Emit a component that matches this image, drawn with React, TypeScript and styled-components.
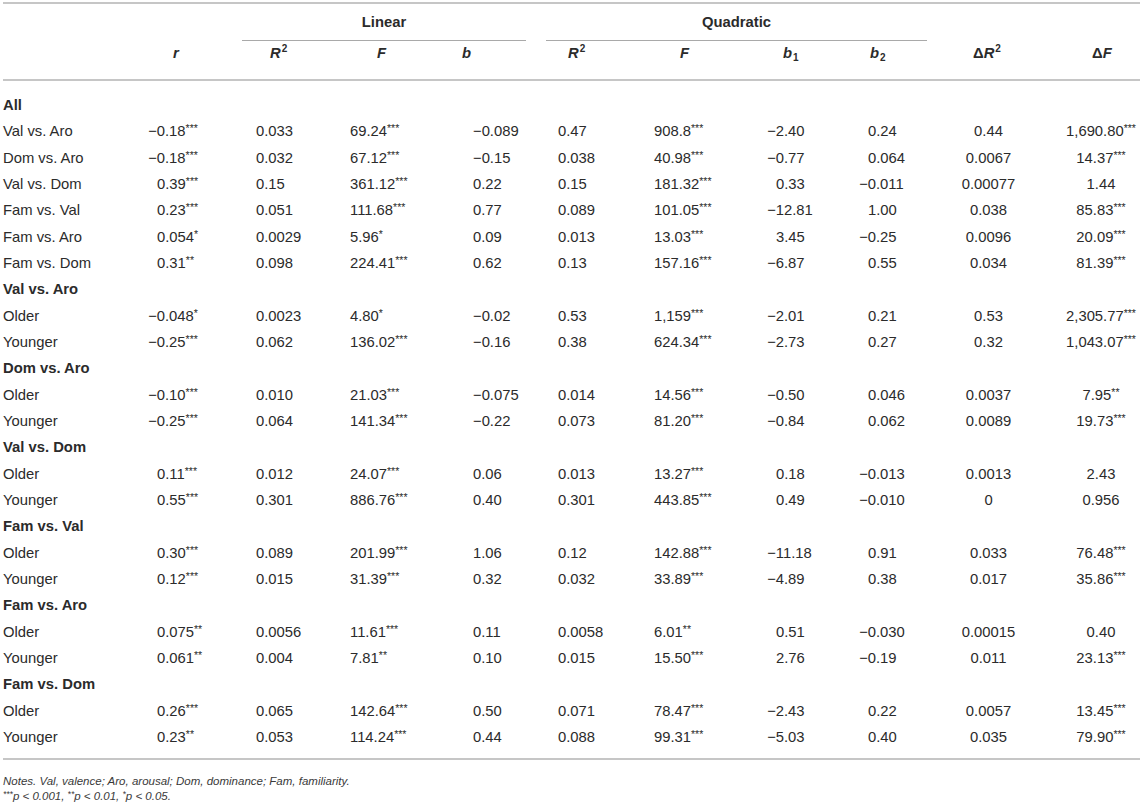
import React from "react";
import styled, { createGlobalStyle } from "styled-components";

const GlobalStyle = createGlobalStyle`
  body {
    margin: 0;
    background: #ffffff;
    font-family: "Liberation Sans", Arial, sans-serif;
    color: #2b2b2b;
  }
`;

// column widths, left to right (label, r, linear R2/F/b, quadratic R2/F/b1/b2, dR2, dF)
const COLS = [117, 112, 92, 116, 96, 84, 120, 90, 107, 103, 100];
const GRID = COLS.map((w) => `${w}px`).join(" ");
const ROW_H = 26.33;

type Mode = "left" | "hang" | "center";
type ColSpec = { mode: Mode; pad: number; head: number };

const SPECS: ColSpec[] = [
  { mode: "hang", pad: 37, head: 53 },
  { mode: "left", pad: 24, head: 38 },
  { mode: "left", pad: 26, head: 53 },
  { mode: "left", pad: 33, head: 22 },
  { mode: "left", pad: 22, head: 32 },
  { mode: "left", pad: 34, head: 60 },
  { mode: "hang", pad: 36, head: 43 },
  { mode: "hang", pad: 38, head: 40 },
  { mode: "center", pad: 0, head: 36 },
  { mode: "center", pad: 22, head: 52 }
];

type Row = { label: string; values?: string[] };

const ROWS: Row[] = [
  { label: "All" },
  { label: "Val vs. Aro", values: ["−0.18***", "0.033", "69.24***", "−0.089", "0.47", "908.8***", "−2.40", "0.24", "0.44", "1,690.80***"] },
  { label: "Dom vs. Aro", values: ["−0.18***", "0.032", "67.12***", "−0.15", "0.038", "40.98***", "−0.77", "0.064", "0.0067", "14.37***"] },
  { label: "Val vs. Dom", values: ["0.39***", "0.15", "361.12***", "0.22", "0.15", "181.32***", "0.33", "−0.011", "0.00077", "1.44"] },
  { label: "Fam vs. Val", values: ["0.23***", "0.051", "111.68***", "0.77", "0.089", "101.05***", "−12.81", "1.00", "0.038", "85.83***"] },
  { label: "Fam vs. Aro", values: ["0.054*", "0.0029", "5.96*", "0.09", "0.013", "13.03***", "3.45", "−0.25", "0.0096", "20.09***"] },
  { label: "Fam vs. Dom", values: ["0.31**", "0.098", "224.41***", "0.62", "0.13", "157.16***", "−6.87", "0.55", "0.034", "81.39***"] },
  { label: "Val vs. Aro" },
  { label: "Older", values: ["−0.048*", "0.0023", "4.80*", "−0.02", "0.53", "1,159***", "−2.01", "0.21", "0.53", "2,305.77***"] },
  { label: "Younger", values: ["−0.25***", "0.062", "136.02***", "−0.16", "0.38", "624.34***", "−2.73", "0.27", "0.32", "1,043.07***"] },
  { label: "Dom vs. Aro" },
  { label: "Older", values: ["−0.10***", "0.010", "21.03***", "−0.075", "0.014", "14.56***", "−0.50", "0.046", "0.0037", "7.95**"] },
  { label: "Younger", values: ["−0.25***", "0.064", "141.34***", "−0.22", "0.073", "81.20***", "−0.84", "0.062", "0.0089", "19.73***"] },
  { label: "Val vs. Dom" },
  { label: "Older", values: ["0.11***", "0.012", "24.07***", "0.06", "0.013", "13.27***", "0.18", "−0.013", "0.0013", "2.43"] },
  { label: "Younger", values: ["0.55***", "0.301", "886.76***", "0.40", "0.301", "443.85***", "0.49", "−0.010", "0", "0.956"] },
  { label: "Fam vs. Val" },
  { label: "Older", values: ["0.30***", "0.089", "201.99***", "1.06", "0.12", "142.88***", "−11.18", "0.91", "0.033", "76.48***"] },
  { label: "Younger", values: ["0.12***", "0.015", "31.39***", "0.32", "0.032", "33.89***", "−4.89", "0.38", "0.017", "35.86***"] },
  { label: "Fam vs. Aro" },
  { label: "Older", values: ["0.075**", "0.0056", "11.61***", "0.11", "0.0058", "6.01**", "0.51", "−0.030", "0.00015", "0.40"] },
  { label: "Younger", values: ["0.061**", "0.004", "7.81**", "0.10", "0.015", "15.50***", "2.76", "−0.19", "0.011", "23.13***"] },
  { label: "Fam vs. Dom" },
  { label: "Older", values: ["0.26***", "0.065", "142.64***", "0.50", "0.071", "78.47***", "−2.43", "0.22", "0.0057", "13.45***"] },
  { label: "Younger", values: ["0.23**", "0.053", "114.24***", "0.44", "0.088", "99.31***", "−5.03", "0.40", "0.035", "79.90***"] }
];

function Value({ text, mode }: { text: string; mode: Mode }) {
  const m = text.match(/^(.*?)(\*+)?$/);
  const num = m ? m[1] : text;
  const stars = m && m[2] ? m[2] : "";
  const neg = mode === "hang" && num.startsWith("−");
  return (
    <>
      {neg ? (
        <>
          <Minus>−</Minus>
          {num.slice(1)}
        </>
      ) : (
        num
      )}
      {stars && <Stars>{stars}</Stars>}
    </>
  );
}

export default function App() {
  return (
    <>
      <GlobalStyle />
      <Page>
        <Table>
          <GroupRow>
            <span />
            <span />
            <Group $span={3}>
              <GroupTitle>Linear</GroupTitle>
            </Group>
            <Group $span={4}>
              <GroupTitle>Quadratic</GroupTitle>
            </Group>
          </GroupRow>
          <HeadRow>
            <span />
            <Head $pad={SPECS[0].head}>
              <Ital>r</Ital>
            </Head>
            <Head $pad={SPECS[1].head}>
              <Ital>R</Ital>
              <Pow>2</Pow>
            </Head>
            <Head $pad={SPECS[2].head}>
              <Ital>F</Ital>
            </Head>
            <Head $pad={SPECS[3].head}>
              <Ital>b</Ital>
            </Head>
            <Head $pad={SPECS[4].head}>
              <Ital>R</Ital>
              <Pow>2</Pow>
            </Head>
            <Head $pad={SPECS[5].head}>
              <Ital>F</Ital>
            </Head>
            <Head $pad={SPECS[6].head}>
              <Ital>b</Ital>
              <Sub>1</Sub>
            </Head>
            <Head $pad={SPECS[7].head}>
              <Ital>b</Ital>
              <Sub>2</Sub>
            </Head>
            <Head $pad={SPECS[8].head}>
              Δ<Ital>R</Ital>
              <Pow>2</Pow>
            </Head>
            <Head $pad={SPECS[9].head}>
              Δ<Ital>F</Ital>
            </Head>
          </HeadRow>
          <Body>
            {ROWS.map((row, i) =>
              row.values ? (
                <DataRow key={i}>
                  <Label>{row.label}</Label>
                  {row.values.map((v, j) => (
                    <Cell key={j} $pad={SPECS[j].pad} $center={SPECS[j].mode === "center"}>
                      <Value text={v} mode={SPECS[j].mode} />
                    </Cell>
                  ))}
                </DataRow>
              ) : (
                <DataRow key={i}>
                  <Section>{row.label}</Section>
                </DataRow>
              )
            )}
          </Body>
        </Table>
        <Notes>
          <NoteLine>Notes. Val, valence; Aro, arousal; Dom, dominance; Fam, familiarity.</NoteLine>
          <NoteLine>
            <NoteStar>***</NoteStar>p &lt; 0.001, <NoteStar>**</NoteStar>p &lt; 0.01, <NoteStar>*</NoteStar>p &lt; 0.05.
          </NoteLine>
        </Notes>
      </Page>
    </>
  );
}

const Page = styled.div`
  width: 1137px;
  padding: 2px 0 0 3px;
`;

const Table = styled.div`
  border-top: 2px solid #c6c6c6;
  border-bottom: 2px solid #c6c6c6;
  font-size: 14.8px;
`;

const GroupRow = styled.div`
  display: grid;
  grid-template-columns: ${GRID};
  height: 37px;
`;

const Group = styled.div<{ $span: number }>`
  grid-column: span ${(p) => p.$span};
  padding: 0 10px;
`;

const GroupTitle = styled.div`
  height: 36px;
  line-height: 36px;
  text-align: center;
  font-weight: bold;
  border-bottom: 1px solid #a9a9a9;
`;

const HeadRow = styled.div`
  display: grid;
  grid-template-columns: ${GRID};
  height: 38px;
  border-bottom: 2px solid #c6c6c6;
`;

const Head = styled.div<{ $pad: number }>`
  padding-left: ${(p) => p.$pad}px;
  padding-top: 3px;
  line-height: 18px;
  font-weight: bold;
  white-space: nowrap;
`;

const Ital = styled.i`
  font-style: italic;
`;

const Pow = styled.span`
  font-size: 10px;
  vertical-align: 6px;
  line-height: 0;
  margin-left: 1px;
`;

const Sub = styled.span`
  font-size: 10px;
  vertical-align: -3px;
  line-height: 0;
  margin-left: 1px;
`;

const Body = styled.div`
  padding: 11px 0 8px;
`;

const DataRow = styled.div`
  display: grid;
  grid-template-columns: ${GRID};
  height: ${ROW_H}px;
  line-height: ${ROW_H}px;
`;

const Label = styled.div`
  white-space: nowrap;
`;

const Section = styled.div`
  grid-column: span 3;
  font-weight: bold;
  white-space: nowrap;
`;

const Cell = styled.div<{ $pad: number; $center?: boolean }>`
  padding-left: ${(p) => p.$pad}px;
  text-align: ${(p) => (p.$center ? "center" : "left")};
  white-space: nowrap;
`;

const Minus = styled.span`
  margin-left: -0.6em;
`;

const Stars = styled.span`
  font-size: 10.5px;
  vertical-align: 4px;
  line-height: 0;
`;

const Notes = styled.div`
  padding-top: 14px;
  font-size: 11.5px;
  font-style: italic;
  color: #3a3a3a;
`;

const NoteLine = styled.div`
  line-height: 15px;
`;

const NoteStar = styled.span`
  font-size: 8.5px;
  vertical-align: 3px;
  line-height: 0;
`;
